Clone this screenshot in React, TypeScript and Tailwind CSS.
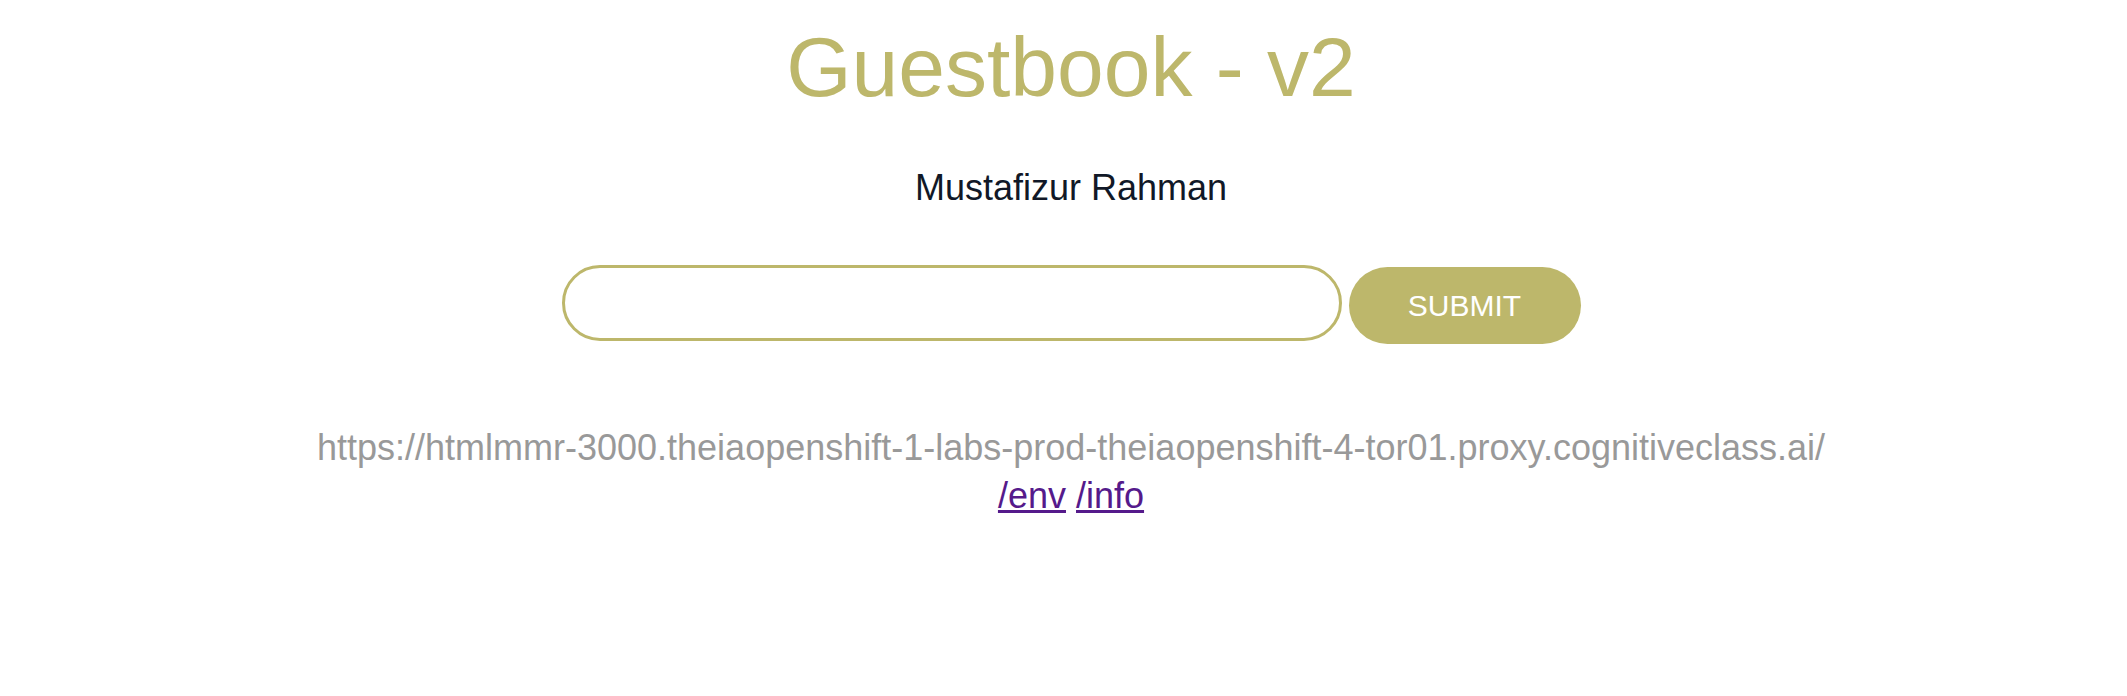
import React from "react";

export default function App() {
  return (
    <div
      className="min-h-[696px] w-full bg-white pl-[15px] flex flex-col items-center"
      style={{ fontFamily: '"Liberation Sans", Arial, sans-serif' }}
    >
      <h1 className="mt-[19px] text-[84px] leading-[normal] text-[#BDB76B]">Guestbook - v2</h1>
      <div className="mt-[51px] text-[36px] leading-[normal] text-[#111827]">Mustafizur Rahman</div>
      <form className="mt-[56px] flex items-start gap-[7px]" onSubmit={(e) => e.preventDefault()}>
        <input
          type="text"
          className="w-[780px] h-[76px] rounded-full border-[3px] border-[#BDB76B] bg-white px-6 text-[30px] outline-none"
        />
        <button
          type="submit"
          className="mt-[2px] w-[232px] h-[77px] rounded-full bg-[#BDB76B] text-white text-[30px] leading-none"
        >
          SUBMIT
        </button>
      </form>
      <div className="mt-[80px] text-center text-[36px] leading-[48px]">
        <div className="text-[#999999]">
          https://htmlmmr-3000.theiaopenshift-1-labs-prod-theiaopenshift-4-tor01.proxy.cognitiveclass.ai/
        </div>
        <div>
          <a href="#env" className="text-[#551A8B] underline">/env</a>{" "}
          <a href="#info" className="text-[#551A8B] underline">/info</a>
        </div>
      </div>
    </div>
  );
}
